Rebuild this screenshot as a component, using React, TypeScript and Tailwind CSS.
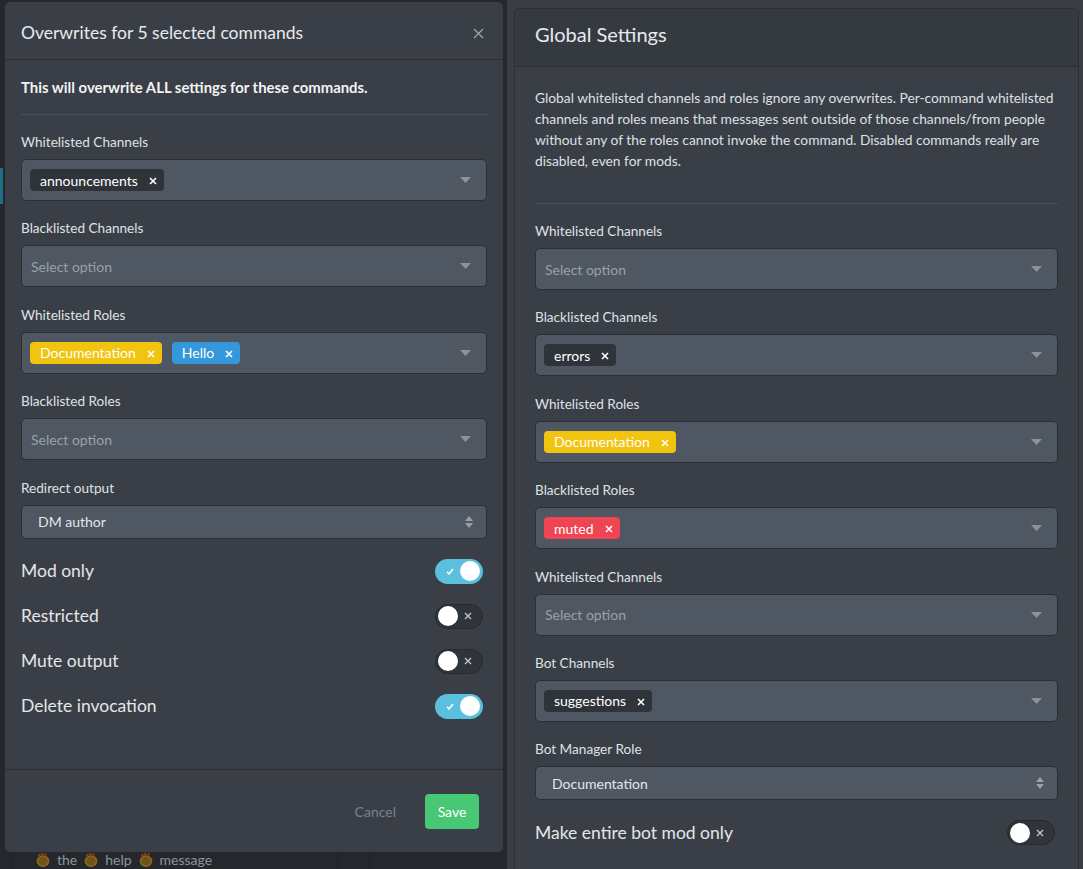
import React from "react";

type TagT = { text: string; color: "dark" | "yellow" | "blue" | "red" };

function Caret() {
  return (
    <svg width="11" height="6" viewBox="0 0 11 6" className="shrink-0">
      <path d="M0 0h11L5.5 6z" fill="#8c929b" />
    </svg>
  );
}

function UpDown() {
  return (
    <svg width="8" height="12" viewBox="0 0 8 12" className="shrink-0">
      <path d="M0 5L4 0L8 5z" fill="#9aa0a8" />
      <path d="M0 7L4 12L8 7z" fill="#9aa0a8" />
    </svg>
  );
}

function Tag({ t }: { t: TagT }) {
  const bg =
    t.color === "dark"
      ? "bg-[#2f333a]"
      : t.color === "yellow"
      ? "bg-[#f1c40f]"
      : t.color === "blue"
      ? "bg-[#3498db]"
      : "bg-[#f14452]";
  return (
    <span
      className={`inline-flex items-center h-[22px] rounded-[4px] pl-[10px] pr-[7px] text-[14px] text-white ${bg}`}
    >
      {t.text}
      <svg width="8" height="8" viewBox="0 0 8 8" className="ml-[11px] mt-[2px]">
        <path d="M1 1L7 7M7 1L1 7" stroke="#ffffff" strokeWidth="1.6" />
      </svg>
    </span>
  );
}

function MultiSelect({ tags }: { tags: TagT[] }) {
  return (
    <div className="h-[42px] rounded-[5px] border border-[#2b2f35] bg-[#4f5762] flex items-center pl-[8px] pr-[15px]">
      <div className="flex-1 flex items-center gap-[10px]">
        {tags.length ? (
          tags.map((t) => <Tag key={t.text} t={t} />)
        ) : (
          <span className="pl-[1px] text-[14px] text-[#9ba1a8]">Select option</span>
        )}
      </div>
      <Caret />
    </div>
  );
}

function NativeSelect({ value }: { value: string }) {
  return (
    <div className="h-[34px] rounded-[5px] border border-[#2b2f35] bg-[#4f5762] flex items-center pl-[16px] pr-[13px]">
      <span className="flex-1 text-[14px] text-[#e4e6e9]">{value}</span>
      <UpDown />
    </div>
  );
}

function Toggle({ on }: { on: boolean }) {
  if (on)
    return (
      <div className="w-[48px] h-[25px] rounded-full bg-[#5bc0de] flex items-center justify-between pl-[11px] pr-[3px]">
        <svg width="8" height="7" viewBox="0 0 8 7">
          <path d="M1 3.8L3 6L7 1" stroke="#ffffff" strokeWidth="1.5" fill="none" />
        </svg>
        <span className="w-[20px] h-[20px] rounded-full bg-white" />
      </div>
    );
  return (
    <div className="w-[48px] h-[25px] rounded-full bg-[#30343b] border border-[#262a2f] flex items-center justify-between pl-[2px] pr-[10px]">
      <span className="w-[20px] h-[20px] rounded-full bg-white" />
      <svg width="8" height="8" viewBox="0 0 8 8">
        <path d="M1 1L7 7M7 1L1 7" stroke="#c5c9ce" strokeWidth="1.3" />
      </svg>
    </div>
  );
}

function Field({
  label,
  children,
  first,
}: {
  label: string;
  children: React.ReactNode;
  first?: boolean;
}) {
  return (
    <div className={first ? "mt-[17px]" : "mt-[17.4px]"}>
      <div className="text-[13.6px] leading-[20px] text-[#dfe2e5] mb-[7px]">{label}</div>
      {children}
    </div>
  );
}

function ToggleRow({ label, on }: { label: string; on: boolean }) {
  return (
    <div className="h-[45px] flex items-center justify-between pr-[4px]">
      <span className="text-[17.5px] text-[#e4e6e9]">{label}</span>
      <Toggle on={on} />
    </div>
  );
}

function Clap() {
  return (
    <svg width="16" height="16" viewBox="0 0 15 15" className="shrink-0">
      <ellipse cx="7.5" cy="8.5" rx="6" ry="5.5" fill="#8a6a1e" />
      <ellipse cx="7.5" cy="8.5" rx="4.5" ry="4" fill="#6e5417" />
      <path d="M3 4L5 2M6 3L7.5 1M9 3L11 1.5" stroke="#b0301f" strokeWidth="1.5" />
    </svg>
  );
}

export default function App() {
  return (
    <div className="w-[1083px] h-[869px] flex overflow-hidden [font-family:Lato,'Noto_Sans',sans-serif]">
      {/* left dimmed area with modal */}
      <div className="w-[507px] h-full bg-[#24272c] flex flex-col shrink-0">
        <div className="flex">
          <div className="w-[5px] flex flex-col">
            <div className="mt-[168px] h-[36px] w-[3px] bg-[#1d6f86]" />
          </div>
          <div className="mt-[2px] w-[498px] h-[850px] rounded-[5px] bg-[#3a3f47] flex flex-col">
            {/* header */}
            <div className="h-[58px] border-b border-[#2a2e34] flex items-center justify-between px-[16px] pt-[5px]">
              <span className="text-[17.5px] text-[#e8eaed]">Overwrites for 5 selected commands</span>
              <svg width="11" height="11" viewBox="0 0 11 11" className="mr-[3px]">
                <path d="M1 1L10 10M10 1L1 10" stroke="#a3a8ae" strokeWidth="1.2" />
              </svg>
            </div>
            {/* body */}
            <div className="flex-1 px-[16px] pt-[17px]">
              <p className="text-[14.9px] leading-[21px] font-bold text-[#f2f3f5]">
                This will overwrite ALL settings for these commands.
              </p>
              <div className="mt-[16px] border-t border-[#4a5058]" />
              <Field label="Whitelisted Channels" first>
                <MultiSelect tags={[{ text: "announcements", color: "dark" }]} />
              </Field>
              <Field label="Blacklisted Channels">
                <MultiSelect tags={[]} />
              </Field>
              <Field label="Whitelisted Roles">
                <MultiSelect
                  tags={[
                    { text: "Documentation", color: "yellow" },
                    { text: "Hello", color: "blue" },
                  ]}
                />
              </Field>
              <Field label="Blacklisted Roles">
                <MultiSelect tags={[]} />
              </Field>
              <Field label="Redirect output">
                <NativeSelect value="DM author" />
              </Field>
              <div className="mt-[10px]">
                <ToggleRow label="Mod only" on />
                <ToggleRow label="Restricted" on={false} />
                <ToggleRow label="Mute output" on={false} />
                <ToggleRow label="Delete invocation" on />
              </div>
            </div>
            {/* footer */}
            <div className="h-[83px] border-t border-[#2a2e34] flex items-center justify-end pr-[24px]">
              <button className="px-[14px] h-[35px] text-[14px] text-[#7b828b] mr-[15px]">Cancel</button>
              <button className="w-[54px] h-[35px] rounded-[4px] bg-[#48c774] text-[14px] text-white">
                Save
              </button>
            </div>
          </div>
        </div>
        {/* content behind overlay */}
        <div className="flex-1 flex">
          <div className="w-[12px]" />
          <div className="w-[326px] border-l border-r border-[#1c1f23] flex items-start gap-[6px] pl-[22px] pt-[0px] text-[14px] leading-[16px] text-[#8f949a]">
            <Clap />
            <span>the</span>
            <Clap />
            <span>help</span>
            <Clap />
            <span>message</span>
          </div>
          <div className="w-[32px] border-r border-[#1c1f23]" />
        </div>
      </div>

      {/* right area */}
      <div className="flex-1 bg-[#393e45] pl-[7px] pt-[8px]">
        <div className="w-[565px] h-[900px] rounded-[5px] border border-[#2b2f35] bg-[#3a3f47] overflow-hidden">
          <div className="h-[58px] bg-[#353a41] border-b border-[#2b2f35] flex items-center px-[20px] pb-[7px]">
            <span className="text-[20px] text-[#e8eaed]">Global Settings</span>
          </div>
          <div className="px-[20px] pt-[20px]">
            <p className="text-[13.8px] leading-[21px] text-[#dde0e3] whitespace-nowrap">
              Global whitelisted channels and roles ignore any overwrites. Per-command whitelisted
              <br />
              channels and roles means that messages sent outside of those channels/from people
              <br />
              without any of the roles cannot invoke the command. Disabled commands really are
              <br />
              disabled, even for mods.
            </p>
            <div className="mt-[32px] border-t border-[#484e56]" />
            <Field label="Whitelisted Channels" first>
              <MultiSelect tags={[]} />
            </Field>
            <Field label="Blacklisted Channels">
              <MultiSelect tags={[{ text: "errors", color: "dark" }]} />
            </Field>
            <Field label="Whitelisted Roles">
              <MultiSelect tags={[{ text: "Documentation", color: "yellow" }]} />
            </Field>
            <Field label="Blacklisted Roles">
              <MultiSelect tags={[{ text: "muted", color: "red" }]} />
            </Field>
            <Field label="Whitelisted Channels">
              <MultiSelect tags={[]} />
            </Field>
            <Field label="Bot Channels">
              <MultiSelect tags={[{ text: "suggestions", color: "dark" }]} />
            </Field>
            <Field label="Bot Manager Role">
              <NativeSelect value="Documentation" />
            </Field>
            <div className="mt-[10px] h-[45px] flex items-center justify-between pr-[3px]">
              <span className="text-[17.5px] text-[#e4e6e9]">Make entire bot mod only</span>
              <Toggle on={false} />
            </div>
          </div>
        </div>
      </div>
    </div>
  );
}
